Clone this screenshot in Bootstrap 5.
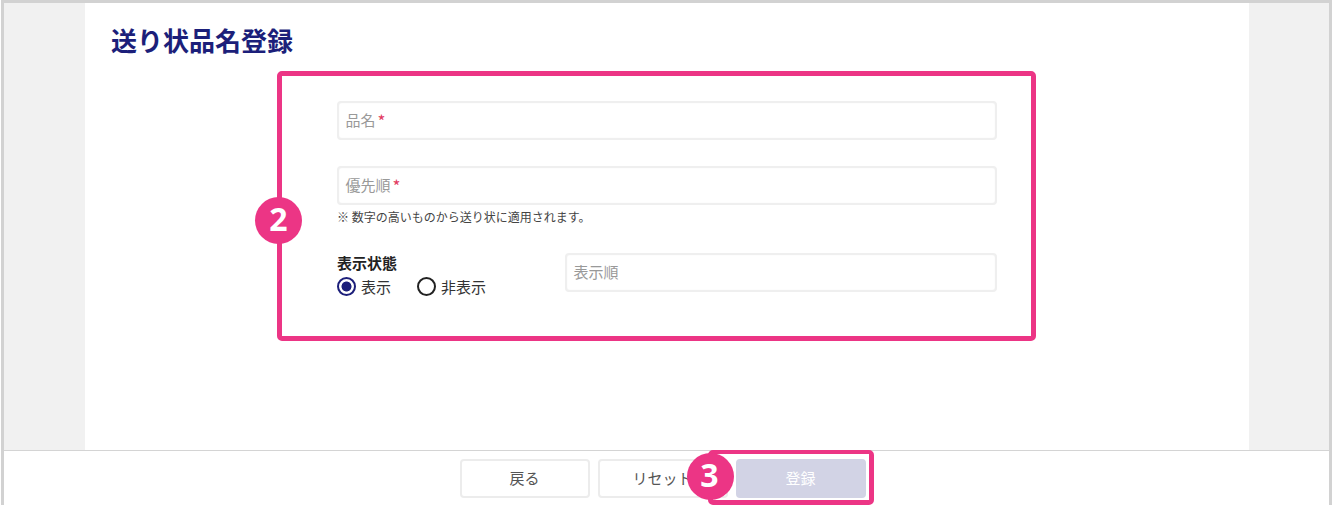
<!DOCTYPE html>
<html lang="ja">
<head>
<meta charset="utf-8">
<title>送り状品名登録</title>
<link rel="stylesheet" href="https://cdn.jsdelivr.net/npm/bootstrap@5.3.0/dist/css/bootstrap.min.css">
<style>
html,body{height:514px;overflow:hidden;background:#fff}
body{font-family:"Noto Sans CJK JP","Liberation Sans",sans-serif;color:#333}
.frame{position:relative;width:1331px;height:505px;margin-left:1px;border:3px solid #d2d2d2;background:#f1f1f1;display:flex;flex-direction:column}
.sheet{width:1164px;margin-left:81px;height:447px;background:#fff;padding:20px 26px 0;flex:none}
.page-title{font-size:26px;line-height:34px;font-weight:700;color:#1c1f7a;margin:0}
.form-area{width:660px;margin:44px 0 0 226px}
.fake-input{height:39px;border:2px solid #efefef;border-radius:4px;padding:0 6.5px;display:flex;align-items:center;font-size:15px;color:#999;background:#fff;box-shadow:inset 0 0 1px #e4e4e4}
.input-second{margin-top:26px}
.req{color:#e23b62;font-size:17px;line-height:1;margin-left:2px}
.hint{font-size:12px;line-height:16px;margin-top:4px;color:#444}
.show-row{margin-top:28px}
.order-box{width:432px;flex:none}
.sec-label{font-size:15px;line-height:20px;font-weight:700;color:#222}
.radio-row{gap:26px;margin-top:4px}
.radio-dot{width:19px;height:19px;border:2px solid #222;border-radius:50%;display:inline-block;flex:none;margin-right:5px}
.radio-dot.on{border-color:#1c1f7a;background:radial-gradient(circle,#1c1f7a 0 4.6px,#fff 5.4px)}
.radio-item{display:flex;align-items:center;font-size:15px;line-height:19px;color:#333}
.foot{height:55px;background:#fff;border-top:1px solid #d4d4d4;flex:none;padding:8px 8px 0 0}
.foot-btn{width:130px;height:39px;border:2px solid #ececec;border-radius:4px;background:#fff;font-size:15px;color:#555;padding:0;font-family:inherit}
.foot-btn.go{background:#d2d3e5;border-color:#d2d3e5;color:#fff}
.hl{position:absolute;border:5px solid #ec3585;border-radius:5px;pointer-events:none}
.hl-a{left:273px;top:68px;width:759px;height:270px}
.hl-b{left:704px;top:447px;width:166px;height:55px;border-width:4px 5px 5px 5px}
.num{position:absolute;width:47px;height:47px;border-radius:50%;background:#ec3585;color:#fff;font:700 32px/44px "Open Sans","Liberation Sans",sans-serif;text-align:center}
.num-a{left:251px;top:194px}
.num-b{left:683px;top:450px;padding-right:2px}
</style>
</head>
<body>
<div class="frame">
  <main class="sheet">
    <h1 class="page-title">送り状品名登録</h1>
    <div class="form-area">
      <div class="fake-input">品名<span class="req">*</span></div>
      <div class="fake-input input-second">優先順<span class="req">*</span></div>
      <div class="hint">※ 数字の高いものから送り状に適用されます。</div>
      <div class="d-flex justify-content-between show-row">
        <div>
          <div class="sec-label">表示状態</div>
          <div class="d-flex radio-row">
            <div class="radio-item"><span class="radio-dot on"></span>表示</div>
            <div class="radio-item"><span class="radio-dot"></span>非表示</div>
          </div>
        </div>
        <div class="fake-input order-box">表示順</div>
      </div>
    </div>
  </main>
  <footer class="foot d-flex justify-content-center gap-2">
    <button class="foot-btn" type="button">戻る</button>
    <button class="foot-btn" type="button">リセット</button>
    <button class="foot-btn go" type="button">登録</button>
  </footer>
  <div class="hl hl-a"></div>
  <div class="hl hl-b"></div>
  <div class="num num-a">2</div>
  <div class="num num-b">3</div>
</div>
</body>
</html>
